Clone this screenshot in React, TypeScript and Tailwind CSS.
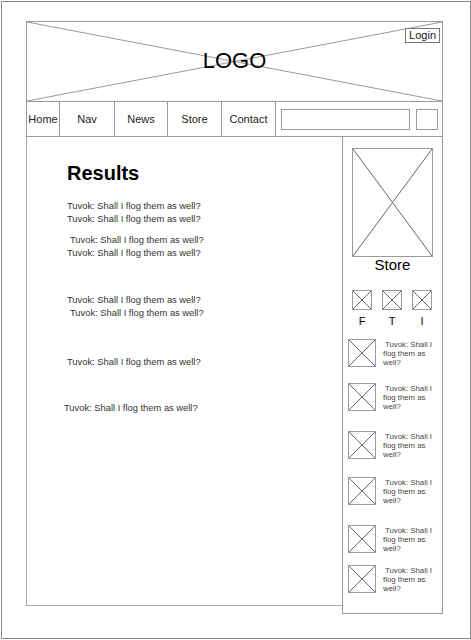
const font = { fontFamily: '"Liberation Sans", Arial, sans-serif' };

const XBox = ({ className }: { className: string }) => (
  <div className={`relative border border-[#999] bg-white ${className}`}>
    <svg className="absolute inset-0 h-full w-full" viewBox="0 0 100 100" preserveAspectRatio="none">
      <line x1="0" y1="0" x2="100" y2="100" stroke="#666" strokeWidth="1" vectorEffect="non-scaling-stroke" />
      <line x1="100" y1="0" x2="0" y2="100" stroke="#666" strokeWidth="1" vectorEffect="non-scaling-stroke" />
    </svg>
  </div>
);

const navItems = [
  { label: "Home", w: "w-[33px]" },
  { label: "Nav", w: "w-[55px]" },
  { label: "News", w: "w-[53px]" },
  { label: "Store", w: "w-[54px]" },
  { label: "Contact", w: "w-[54px]" },
];

const line = "Tuvok: Shall I flog them as well?";

const results = [
  { mt: "mt-[15px]", pl: "pl-0" },
  { mt: "mt-0", pl: "pl-0" },
  { mt: "mt-[7px]", pl: "pl-[3px]" },
  { mt: "mt-0", pl: "pl-0" },
  { mt: "mt-[33px]", pl: "pl-0" },
  { mt: "mt-0", pl: "pl-[3px]" },
  { mt: "mt-[36px]", pl: "pl-0" },
  { mt: "mt-[32px]", pl: "-ml-[3px]" },
];

const sideItems = ["mt-[12px]", "mt-[16px]", "mt-[20px]", "mt-[18px]", "mt-[20px]", "mt-[12px]"];

export default function App() {
  return (
    <div className="h-[640px] w-[471px] bg-white text-[#222]" style={font}>
      <div className="ml-[1px] mt-[1px] h-[638px] w-[470px] border border-[#888] pl-[24px] pt-[19px]">
        <div className="w-[417px]">
          {/* Header */}
          <div className="relative h-[81px] border border-[#999]">
            <svg className="absolute inset-0 h-full w-full" viewBox="0 0 415 79" preserveAspectRatio="none">
              <line x1="0" y1="0" x2="415" y2="79" stroke="#999" strokeWidth="1" />
              <line x1="415" y1="0" x2="0" y2="79" stroke="#999" strokeWidth="1" />
            </svg>
            <div className="relative flex h-full items-center justify-center text-[22px] leading-none text-black">
              <span className="-mt-[1px]">LOGO</span>
            </div>
            <div className="absolute right-[2px] top-[6px] border border-[#777] bg-white px-[3px] text-[11px] leading-[13px]">
              Login
            </div>
          </div>

          {/* Nav */}
          <div className="flex h-[35px] border-x border-b border-[#999] text-[11px]">
            {navItems.map((n) => (
              <div key={n.label} className={`flex items-center justify-center border-r border-[#999] ${n.w}`}>
                {n.label}
              </div>
            ))}
            <div className="flex flex-1 items-center gap-[6px] pl-[5px]">
              <div className="h-[21px] w-[129px] border border-[#999]" />
              <div className="h-[21px] w-[22px] border border-[#999]" />
            </div>
          </div>

          {/* Body */}
          <div className="flex items-start">
            <div className="h-[469px] w-[316px] border-b border-l border-[#aaa] pl-[40px] pt-[24px]">
              <h1 className="text-[20px] font-bold leading-[24px] text-black">Results</h1>
              {results.map((r, i) => (
                <div key={i} className={`text-[9.35px] leading-[13.4px] text-[#333] ${r.mt} ${r.pl}`}>
                  {line}
                </div>
              ))}
            </div>

            <div className="h-[477px] w-[101px] border-x border-b border-[#999]">
              <XBox className="ml-[9px] mt-[11px] h-[109px] w-[81px]" />
              <div className="ml-[9px] w-[81px] text-center text-[15px] leading-[16px] text-black">Store</div>
              <div className="ml-[9px] mt-[17px] flex gap-[10px]">
                {["F", "T", "I"].map((s) => (
                  <div key={s} className="flex w-[20px] flex-col items-center">
                    <XBox className="h-[20px] w-[20px]" />
                    <div className="mt-[5px] text-[11px] leading-[12px] text-black">{s}</div>
                  </div>
                ))}
              </div>
              {sideItems.map((mt, i) => (
                <div key={i} className={`ml-[5px] flex items-start gap-[7px] ${mt}`}>
                  <XBox className="h-[28px] w-[28px] shrink-0" />
                  <div className="mt-[1px] w-[53px] indent-[2px] text-[7.8px] leading-[9px] text-[#444]">
                    {line}
                  </div>
                </div>
              ))}
            </div>
          </div>
        </div>
      </div>
    </div>
  );
}
